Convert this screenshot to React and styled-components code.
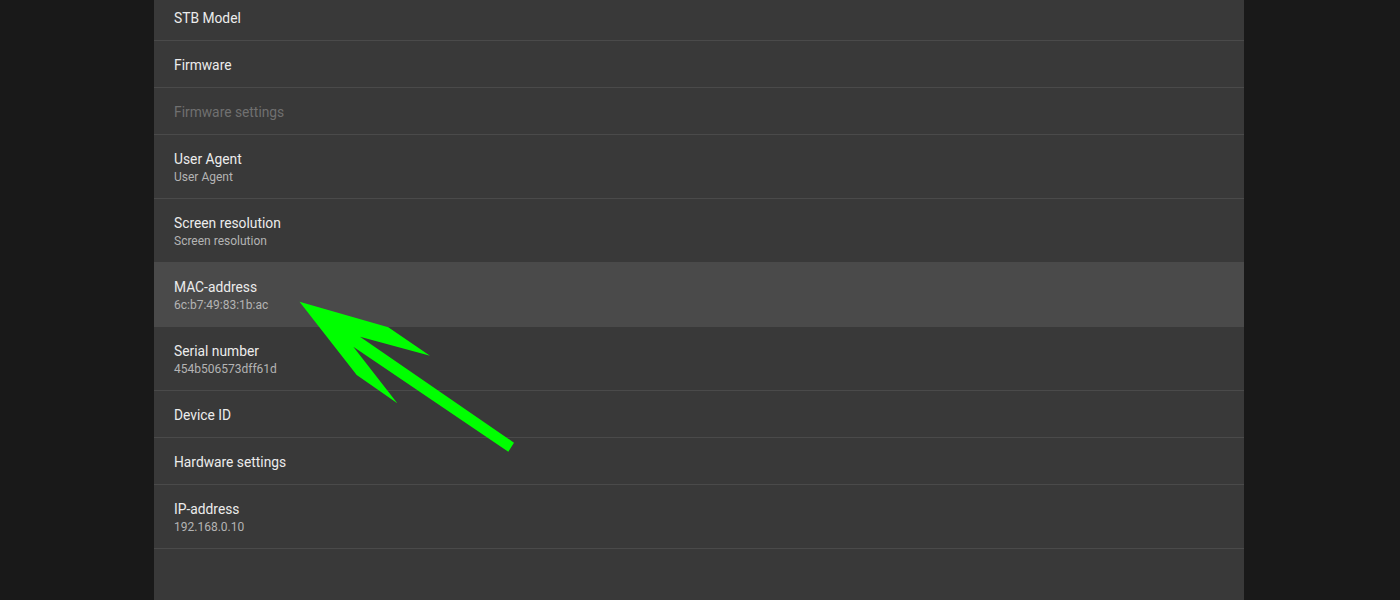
import React from "react";
import styled, { createGlobalStyle } from "styled-components";

const GlobalStyle = createGlobalStyle`
  html, body {
    margin: 0;
    padding: 0;
    background: #191919;
    overflow: hidden;
  }
  body {
    font-family: Roboto, "Noto Sans", sans-serif;
  }
`;

const items = [
  { title: "STB Model" },
  { title: "Firmware" },
  { title: "Firmware settings", disabled: true },
  { title: "User Agent", value: "User Agent" },
  { title: "Screen resolution", value: "Screen resolution" },
  { title: "MAC-address", value: "6c:b7:49:83:1b:ac", focused: true },
  { title: "Serial number", value: "454b506573dff61d" },
  { title: "Device ID" },
  { title: "Hardware settings" },
  { title: "IP-address", value: "192.168.0.10" },
];

export default function App() {
  return (
    <>
      <GlobalStyle />
      <Screen>
        <Panel>
          <List>
            {items.map((item) => (
              <Row key={item.title} $focused={item.focused} $tall={!!item.value}>
                <Title $disabled={item.disabled}>{item.title}</Title>
                {item.value && <Value>{item.value}</Value>}
              </Row>
            ))}
          </List>
        </Panel>
        <Arrow viewBox="0 0 1400 600">
          <polygon
            points="299.5,301.7 388.3,327.3 430,355.7 360,336.7 514,442.7 508.3,451.7 353.3,346.7 397.3,403.3 356.7,375"
            fill="#00ff00"
          />
        </Arrow>
      </Screen>
    </>
  );
}

const Screen = styled.div`
  position: relative;
  width: 1400px;
  height: 600px;
  display: flex;
  background: #191919;
  overflow: hidden;
`;

const Panel = styled.div`
  width: 1090px;
  margin-left: 154px;
  height: 100%;
  background: #393939;
  overflow: hidden;
`;

const List = styled.div`
  margin-top: -6px;
  display: flex;
  flex-direction: column;
`;

const Row = styled.div`
  box-sizing: border-box;
  height: ${(p) => (p.$tall ? "64px" : "47px")};
  padding: 2px 0 0 20px;
  border-bottom: 1px solid #4a4a4a;
  background: ${(p) => (p.$focused ? "#4a4a4a" : "transparent")};
  display: flex;
  flex-direction: column;
  justify-content: center;
`;

const Title = styled.div`
  font-size: 13.8px;
  line-height: 18px;
  color: ${(p) => (p.$disabled ? "#707070" : "#ececec")};
`;

const Value = styled.div`
  font-size: 12px;
  line-height: 18px;
  color: #b4b4b4;
`;

const Arrow = styled.svg`
  position: absolute;
  left: 0;
  top: 0;
  width: 1400px;
  height: 600px;
  pointer-events: none;
`;
